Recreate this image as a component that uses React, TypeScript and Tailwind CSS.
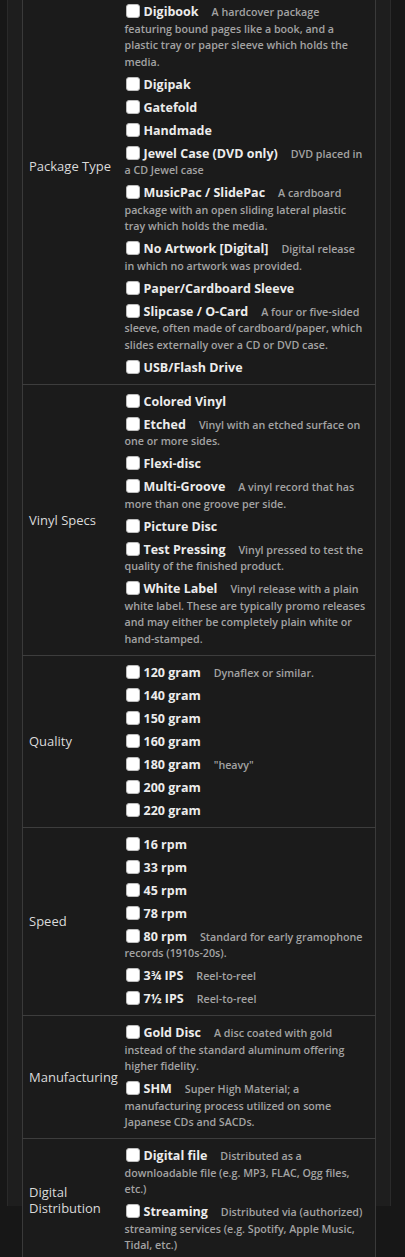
type Opt = { name: string; desc?: string };

const rows: { label: string; opts: Opt[] }[] = [
  {
    label: "Package Type",
    opts: [
      { name: "Cassette Case" },
      { name: "Clamshell Case" },
      {
        name: "Digibook",
        desc: "A hardcover package featuring bound pages like a book, and a plastic tray or paper sleeve which holds the media.",
      },
      { name: "Digipak" },
      { name: "Gatefold" },
      { name: "Handmade" },
      { name: "Jewel Case (DVD only)", desc: "DVD placed in a CD Jewel case" },
      {
        name: "MusicPac / SlidePac",
        desc: "A cardboard package with an open sliding lateral plastic tray which holds the media.",
      },
      { name: "No Artwork [Digital]", desc: "Digital release in which no artwork was provided." },
      { name: "Paper/Cardboard Sleeve" },
      {
        name: "Slipcase / O-Card",
        desc: "A four or five-sided sleeve, often made of cardboard/paper, which slides externally over a CD or DVD case.",
      },
      { name: "USB/Flash Drive" },
    ],
  },
  {
    label: "Vinyl Specs",
    opts: [
      { name: "Colored Vinyl" },
      { name: "Etched", desc: "Vinyl with an etched surface on one or more sides." },
      { name: "Flexi-disc" },
      { name: "Multi-Groove", desc: "A vinyl record that has more than one groove per side." },
      { name: "Picture Disc" },
      { name: "Test Pressing", desc: "Vinyl pressed to test the quality of the finished product." },
      {
        name: "White Label",
        desc: "Vinyl release with a plain white label. These are typically promo releases and may either be completely plain white or hand-stamped.",
      },
    ],
  },
  {
    label: "Quality",
    opts: [
      { name: "120 gram", desc: "Dynaflex or similar." },
      { name: "140 gram" },
      { name: "150 gram" },
      { name: "160 gram" },
      { name: "180 gram", desc: '"heavy"' },
      { name: "200 gram" },
      { name: "220 gram" },
    ],
  },
  {
    label: "Speed",
    opts: [
      { name: "16 rpm" },
      { name: "33 rpm" },
      { name: "45 rpm" },
      { name: "78 rpm" },
      { name: "80 rpm", desc: "Standard for early gramophone records (1910s-20s)." },
      { name: "3¾ IPS", desc: "Reel-to-reel" },
      { name: "7½ IPS", desc: "Reel-to-reel" },
    ],
  },
  {
    label: "Manufacturing",
    opts: [
      {
        name: "Gold Disc",
        desc: "A disc coated with gold instead of the standard aluminum offering higher fidelity.",
      },
      {
        name: "SHM",
        desc: "Super High Material; a manufacturing process utilized on some Japanese CDs and SACDs.",
      },
    ],
  },
  {
    label: "Digital Distribution",
    opts: [
      {
        name: "Digital file",
        desc: "Distributed as a downloadable file (e.g. MP3, FLAC, Ogg files, etc.)",
      },
      {
        name: "Streaming",
        desc: "Distributed via (authorized) streaming services (e.g. Spotify, Apple Music, Tidal, etc.)",
      },
    ],
  },
];

const Option = ({ opt }: { opt: Opt }) => (
  <div className="py-[3.25px] text-[10.7px] leading-[16.5px]">
    <span className="inline-block w-[14px] h-[14px] ml-px mr-[4px] bg-white rounded-[3px] border border-[#bdbdbd] align-[-2px]" />
    <span className="text-[12.5px] font-bold text-[#ececec]">{opt.name}</span>
    {opt.desc && <span className="ml-[13px] font-semibold text-[#a3a3a3]">{opt.desc}</span>}
  </div>
);

export default function App() {
  return (
    <div className="min-h-screen h-[1257px] overflow-hidden bg-[#171717] font-['Open_Sans',sans-serif]">
      <div className="ml-[7px] w-[384px] h-full bg-[#1e1e1e] border-x border-[#2a2a2a] pl-[14px] pr-[14px]">
        <table className="-mt-[51px] w-[354px] table-fixed border-collapse bg-[#1b1b1b] border-x border-[#3a3a3a]">
          <colgroup>
            <col className="w-[102px]" />
            <col />
          </colgroup>
          <tbody>
            {rows.map((r) => (
              <tr key={r.label} className="border-b border-[#3d3d3d]">
                <td className="pl-[6px] pr-[4px] align-middle text-[13px] leading-[16px] text-[#dadada]">
                  {r.label}
                </td>
                <td className="pl-[0px] pr-[8px] pt-[6px] pb-[4px] align-top">
                  {r.opts.map((o) => (
                    <Option key={o.name} opt={o} />
                  ))}
                </td>
              </tr>
            ))}
          </tbody>
        </table>
      </div>
    </div>
  );
}
